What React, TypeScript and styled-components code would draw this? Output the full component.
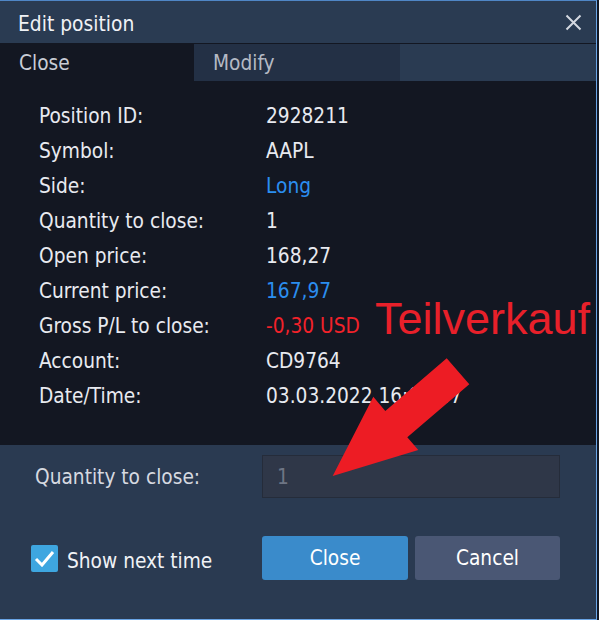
import React from "react";
import styled, { createGlobalStyle } from "styled-components";

const GlobalStyle = createGlobalStyle`
  body {
    margin: 0;
    background: #131722;
    font-family: "DejaVu Sans Condensed", "Liberation Sans", sans-serif;
  }
`;

const Dialog = styled.div`
  position: relative;
  width: 596px;
  height: 618px;
  display: flex;
  flex-direction: column;
  border-top: 1px solid #4f86c6;
  border-right: 1px solid #6aa5e6;
  border-bottom: 1px solid #6aa5e6;
  background: #2a3b52;
  overflow: hidden;
`;

const TitleBar = styled.div`
  height: 42px;
  flex-shrink: 0;
  display: flex;
  align-items: center;
  justify-content: space-between;
  padding: 0 14px 0 18px;
  border-bottom: 1px solid #131722;
  color: #f0f2f6;
  font-size: 20.8px;
`;

const Title = styled.span`
  padding-top: 3px;
`;

const CloseIcon = styled.button`
  width: 18px;
  height: 18px;
  padding: 0;
  border: none;
  background: none;
  display: flex;
  align-items: center;
  justify-content: center;
  cursor: pointer;
`;

const Tabs = styled.div`
  height: 37px;
  flex-shrink: 0;
  display: flex;
`;

const Tab = styled.div<{ $active?: boolean; $width: number }>`
  width: ${(p) => p.$width}px;
  display: flex;
  align-items: center;
  padding-left: 19px;
  box-sizing: border-box;
  font-size: 20.7px;
  color: ${(p) => (p.$active ? "#c9cdd6" : "#b4b9c4")};
  background: ${(p) => (p.$active ? "#131722" : "#233045")};
`;

const Details = styled.div`
  height: 364px;
  flex-shrink: 0;
  box-sizing: border-box;
  padding: 17px 0 0 39px;
  background: #131722;
  display: grid;
  grid-template-columns: 227px 1fr;
  grid-auto-rows: 35px;
  align-content: start;
`;

const Label = styled.div`
  display: flex;
  align-items: center;
  font-size: 20.7px;
  color: #e8eaf0;
`;

const Value = styled(Label)<{ $tone?: "blue" | "red" }>`
  color: ${(p) =>
    p.$tone === "blue" ? "#2b8ef0" : p.$tone === "red" ? "#f2222a" : "#e8eaf0"};
`;

const Footer = styled.div`
  flex: 1;
  background: #2a3a51;
  box-sizing: border-box;
  padding: 10px 36px 0 31px;
  display: grid;
  grid-template-columns: 231px 1fr;
  grid-template-rows: 43px 44px;
  row-gap: 38px;
`;

const FieldLabel = styled.div`
  display: flex;
  align-items: center;
  padding-left: 4px;
  font-size: 20.7px;
  color: #d6d9e0;
`;

const Input = styled.input`
  box-sizing: border-box;
  width: 100%;
  height: 43px;
  padding: 0 14px;
  background: #2f3748;
  border: 1px solid #252c3a;
  color: #6e7585;
  font-family: inherit;
  font-size: 20.7px;
  outline: none;
`;

const CheckRow = styled.label`
  display: flex;
  align-items: center;
  gap: 9px;
  font-size: 20.7px;
  color: #f0f2f6;
`;

const CheckText = styled.span`
  padding-top: 6px;
`;

const CheckBox = styled.span`
  width: 27px;
  height: 27px;
  border-radius: 2px;
  background: #3ea6e0;
  display: flex;
  align-items: center;
  justify-content: center;
`;

const Buttons = styled.div`
  display: grid;
  grid-template-columns: 146px 145px;
  gap: 7px;
`;

const Button = styled.button<{ $primary?: boolean }>`
  border: none;
  border-radius: 3px;
  font-family: inherit;
  font-size: 20.7px;
  color: #ffffff;
  background: ${(p) => (p.$primary ? "#3a8bcb" : "#4a5774")};
  cursor: pointer;
`;

const Note = styled.div`
  position: absolute;
  left: 375px;
  top: 295px;
  font-family: "Liberation Sans", sans-serif;
  font-size: 45px;
  line-height: 45px;
  color: #e8202a;
  white-space: nowrap;
`;

const Arrow = styled.svg`
  position: absolute;
  left: 330px;
  top: 354px;
`;

const rows: { label: string; value: string; tone?: "blue" | "red" }[] = [
  { label: "Position ID:", value: "2928211" },
  { label: "Symbol:", value: "AAPL" },
  { label: "Side:", value: "Long", tone: "blue" },
  { label: "Quantity to close:", value: "1" },
  { label: "Open price:", value: "168,27" },
  { label: "Current price:", value: "167,97", tone: "blue" },
  { label: "Gross P/L to close:", value: "-0,30 USD", tone: "red" },
  { label: "Account:", value: "CD9764" },
  { label: "Date/Time:", value: "03.03.2022 16:09:47" },
];

export default function App() {
  return (
    <>
      <GlobalStyle />
      <Dialog>
        <TitleBar>
          <Title>Edit position</Title>
          <CloseIcon aria-label="Close">
            <svg width="17" height="17" viewBox="0 0 17 17">
              <path
                d="M1.5 1.5 L15.5 15.5 M15.5 1.5 L1.5 15.5"
                stroke="#d4d8e0"
                strokeWidth="2"
              />
            </svg>
          </CloseIcon>
        </TitleBar>
        <Tabs>
          <Tab $active $width={194}>
            Close
          </Tab>
          <Tab $width={206}>Modify</Tab>
        </Tabs>
        <Details>
          {rows.map((r) => (
            <React.Fragment key={r.label}>
              <Label>{r.label}</Label>
              <Value $tone={r.tone}>{r.value}</Value>
            </React.Fragment>
          ))}
        </Details>
        <Footer>
          <FieldLabel>Quantity to close:</FieldLabel>
          <Input defaultValue="1" />
          <CheckRow>
            <CheckBox>
              <svg width="21" height="17" viewBox="0 0 21 17">
                <path
                  d="M2 9 L8 15 L19 2"
                  fill="none"
                  stroke="#ffffff"
                  strokeWidth="3"
                />
              </svg>
            </CheckBox>
            <CheckText>Show next time</CheckText>
          </CheckRow>
          <Buttons>
            <Button $primary>Close</Button>
            <Button>Cancel</Button>
          </Buttons>
        </Footer>
        <Note>Teilverkauf</Note>
        <Arrow width="142" height="124" viewBox="0 0 142 124">
          <polygon
            points="116.7,3.3 139.3,29.3 77.3,82.3 88.3,95 2.7,121 43.3,41.7 55.3,56"
            fill="#ed1c24"
          />
        </Arrow>
      </Dialog>
    </>
  );
}
